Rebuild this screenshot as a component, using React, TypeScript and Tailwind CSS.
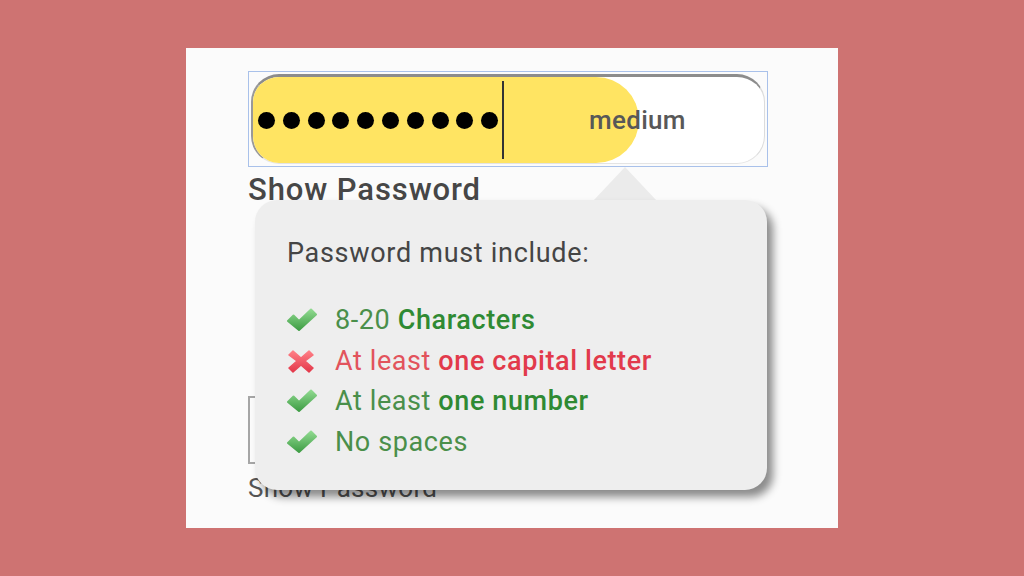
import React from 'react';

const font = { fontFamily: 'Roboto, "Noto Sans", Arial, sans-serif' };

function Check() {
  return (
    <svg width="30" height="24" viewBox="0 0 30 24" className="shrink-0">
      <defs>
        <linearGradient id="chk" x1="0" y1="0" x2="0" y2="1">
          <stop offset="0" stopColor="#8fd98f" />
          <stop offset="1" stopColor="#3f9d45" />
        </linearGradient>
      </defs>
      <path
        d="M1 13 L6.5 7.5 L12 13 L24 1.5 L29 6.5 L12 22 Z"
        fill="url(#chk)"
        stroke="url(#chk)"
        strokeWidth="2"
        strokeLinejoin="round"
      />
    </svg>
  );
}

function Cross() {
  return (
    <svg width="30" height="24" viewBox="0 0 30 24" className="shrink-0">
      <defs>
        <linearGradient id="crs" x1="0" y1="0" x2="0" y2="1">
          <stop offset="0" stopColor="#ff7f86" />
          <stop offset="1" stopColor="#e3384a" />
        </linearGradient>
      </defs>
      <path
        d="M6 2 L14 9 L22 2 L26 6 L18 12 L26 19 L22 23 L14 16 L6 23 L2 19 L10 12 L2 6 Z"
        fill="url(#crs)"
        stroke="url(#crs)"
        strokeWidth="1.5"
        strokeLinejoin="round"
      />
    </svg>
  );
}

const rules = [
  { ok: true, plain: '8-20 ', bold: 'Characters' },
  { ok: false, plain: 'At least ', bold: 'one capital letter' },
  { ok: true, plain: 'At least ', bold: 'one number' },
  { ok: true, plain: 'No spaces', bold: '' },
];

export default function App() {
  return (
    <div className="w-full h-screen bg-[#ce7372] flex items-center justify-center" style={font}>
      <div className="relative w-[652px] h-[480px] bg-[#fbfbfb] pt-[23px] pl-[62px]">
        {/* password field */}
        <div className="w-[520px] h-[96px] border border-[#a9c1ea] p-[2px]">
          <div className="relative h-full rounded-[28px] bg-white border-t-[3px] border-l-2 border-r border-b border-t-[#8c8c8c] border-l-[#999] border-r-[#dcdcdc] border-b-[#e4e4e4] overflow-hidden">
            <div className="h-full w-[386px] rounded-r-full bg-[#ffe462] flex items-center pl-[5px]">
              <div className="flex gap-[7.8px]">
                {Array.from({ length: 10 }).map((_, i) => (
                  <div key={i} className="w-[17px] h-[17px] rounded-full bg-black" />
                ))}
              </div>
              <div className="ml-[4px] w-[2px] h-[78px] bg-[#333]" />
            </div>
            <span className="absolute left-[336px] top-1/2 -translate-y-1/2 text-[26px] font-medium text-[#585858] leading-none tracking-[0.3px]">
              medium
            </span>
          </div>
        </div>
        <div className="mt-[6px] text-[31px] leading-[34px] font-medium text-[#474747] tracking-[0.9px]">Show Password</div>

        {/* confirm field, under the tooltip */}
        <div className="mt-[189px] w-[505px] h-[68px] border-2 border-[#a6a6a6]" />
        <div className="mt-[9px] text-[26px] leading-[30px] text-[#555] tracking-[0.3px]">Show Password</div>

        {/* tooltip arrow */}
        <div className="absolute left-[407px] top-[119px] w-[64px] h-[34px] bg-[#ebebeb] [clip-path:polygon(50%_0,100%_100%,0_100%)]" />

        {/* tooltip */}
        <div className="absolute left-[69px] top-[152px] w-[512px] h-[290px] rounded-[22px] bg-[#eeeeee] shadow-[6px_7px_8px_rgba(0,0,0,0.45)] pl-[32px] pt-[38px]">
          <div className="text-[27px] leading-[30px] text-[#454545] tracking-[0.7px]">Password must include:</div>
          <div className="mt-[32px] flex flex-col">
            {rules.map((r, i) => (
              <div key={i} className="flex items-center h-[40.5px]">
                <div className="w-[48px]">{r.ok ? <Check /> : <Cross />}</div>
                <span className={`text-[27px] tracking-[0.6px] ${r.ok ? 'text-[#4a8f4a]' : 'text-[#e2535c]'}`}>
                  {r.plain}
                  {r.bold && (
                    <span className={`font-medium ${r.ok ? 'text-[#2f8a33]' : 'text-[#e23a4b]'}`}>{r.bold}</span>
                  )}
                </span>
              </div>
            ))}
          </div>
        </div>
      </div>
    </div>
  );
}
